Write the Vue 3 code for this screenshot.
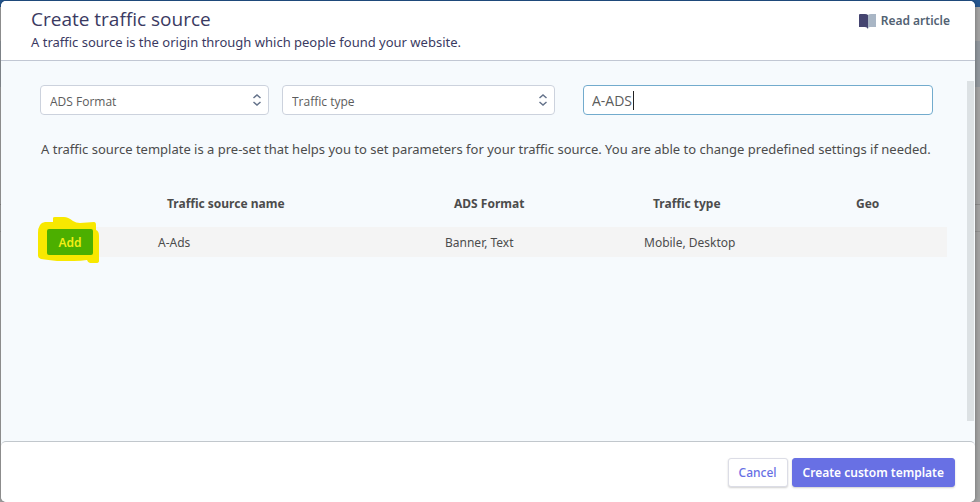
<script setup>
import { ref } from 'vue'

const format = ref('')
const trafficType = ref('')
const search = ref('A-ADS')
const sources = [{ name: 'A-Ads', formats: 'Banner, Text', types: 'Mobile, Desktop', geo: '' }]
</script>

<template>
  <div class="backdrop">
    <section class="modal" role="dialog" aria-labelledby="dialog-title">
      <header class="head">
        <div>
          <h1 id="dialog-title">Create traffic source</h1>
          <p>A traffic source is the origin through which people found your website.</p>
        </div>
        <a class="article" href="#">
          <svg width="18" height="15" viewBox="0 0 18 15" aria-hidden="true">
            <path d="M0 1Q0 0 1 0H6Q8 0 9 1V15Q8 13 6 13H0Z" fill="#444470" />
            <path d="M9 1Q10 0 12 0H17V13H11Q9 13 9 15Z" fill="#a9b6c5" />
          </svg>
          <span>Read article</span>
        </a>
      </header>

      <main class="body">
        <div class="filters">
          <div class="field">
            <select v-model="format" aria-label="ADS Format">
              <option value="">ADS Format</option>
            </select>
            <svg class="chevrons" width="10" height="12" viewBox="0 0 10 12" aria-hidden="true">
              <path d="M1.5 4L5 1L8.500 4M1.500 8L5 11L8.500 8" />
            </svg>
          </div>
          <div class="field">
            <select v-model="trafficType" aria-label="Traffic type">
              <option value="">Traffic type</option>
            </select>
            <svg class="chevrons" width="10" height="12" viewBox="0 0 10 12" aria-hidden="true">
              <path d="M1.5 4L5 1L8.500 4M1.500 8L5 11L8.500 8" />
            </svg>
          </div>
          <div class="field search">
            <input v-model="search" type="text" aria-label="Search" />
            <span class="caret"></span>
          </div>
        </div>

        <p class="hint">A traffic source template is a pre-set that helps you to set parameters for your traffic source. You are able to change predefined settings if needed.</p>

        <table>
          <colgroup>
            <col class="c-action" /><col /><col class="c-format" /><col class="c-type" /><col class="c-geo" />
          </colgroup>
          <thead>
            <tr>
              <th></th>
              <th>Traffic source name</th>
              <th>ADS Format</th>
              <th>Traffic type</th>
              <th>Geo</th>
            </tr>
          </thead>
          <tbody>
            <tr v-for="s in sources" :key="s.name">
              <td class="action">
                <svg class="marker" width="64" height="48" viewBox="0 0 64 48" aria-hidden="true">
                  <path d="M16 2Q16 1 18 1H27Q31 1 36 5Q39 7 43 7L57 6Q59 6 59 9V14Q62 15 62 20V45Q62 47 59 47H53Q51 47 50 44Q44 45 37 45H20Q11 44 4 43Q1 42 1 40V17Q1 7 8 6H16Z" fill="#f8e800" />
                </svg>
                <button class="add" type="button">Add</button>
              </td>
              <td>{{ s.name }}</td>
              <td>{{ s.formats }}</td>
              <td>{{ s.types }}</td>
              <td>{{ s.geo }}</td>
            </tr>
          </tbody>
        </table>
        <div class="scrollbar"></div>
      </main>

      <footer class="foot">
        <button class="btn cancel" type="button">Cancel</button>
        <button class="btn primary" type="button">Create custom template</button>
      </footer>
    </section>
  </div>
</template>

<style>
body {
  margin: 0;
}
</style>

<style scoped>
* {
  box-sizing: border-box;
}
.backdrop {
  min-height: 100vh;
  display: flex;
  padding: 1px 5px 0 1px;
  font-family: "Noto Sans", "Open Sans", sans-serif;
  font-size: 13px;
  color: #4c4c4c;
  background: linear-gradient(#24568f 0 7px, #a3a3a3 7px 41px, #91979d 41px 87px, #a3a3a3 87px 204px, #8b8b8b 204px 205px, #a3a3a3 205px 231px, #929292 231px 232px, #a3a3a3 232px);
}
.modal {
  flex: 1;
  display: flex;
  flex-direction: column;
  border-radius: 5px;
  overflow: hidden;
  background: #f6fafd;
  box-shadow: 0 0 5px #00000055;
}
.head {
  display: flex;
  justify-content: space-between;
  align-items: flex-start;
  height: 60px;
  padding: 6px 25px 0 30px;
  background: #fff;
  border-bottom: 1px solid #c1c7d3;
  color: #3a3a62;
}
h1 {
  margin: 0;
  font-family: "Open Sans", sans-serif;
  font-size: 19px;
  line-height: 25px;
  font-weight: 400;
}
.head p {
  margin: 0;
  line-height: 20px;
}
.article {
  display: flex;
  align-items: center;
  gap: 4px;
  padding-top: 4px;
  font-size: 12px;
  line-height: 20px;
  font-weight: 600;
  color: #526273;
  text-decoration: none;
}
.body {
  position: relative;
  flex: 1;
  padding: 24px 28px 24px 39px;
}
.filters {
  display: grid;
  grid-template-columns: 229fr 273fr 365fr;
  gap: 13px;
  padding-right: 14px;
}
.field {
  position: relative;
}
.search {
  margin-left: 15px;
}
select,
input {
  display: block;
  width: 100%;
  height: 30px;
  padding: 2px 9px 0;
  border: 1px solid #ccd2dd;
  border-radius: 4px;
  background: #fff;
  font-family: "Open Sans", sans-serif;
  font-size: 12px;
  color: #5c5c5c;
  appearance: none;
  outline: none;
}
input {
  padding: 0 8px;
  border-color: #72abcd;
  font-size: 14px;
}
.chevrons {
  position: absolute;
  right: 7px;
  top: 9px;
  fill: none;
  stroke: #65738b;
  stroke-width: 1.5;
}
.caret {
  position: absolute;
  left: 50px;
  top: 6px;
  width: 1px;
  height: 19px;
  background: #222;
}
.hint {
  margin: 24px 0 0;
  padding-left: 1px;
  line-height: 20px;
  white-space: nowrap;
}
table {
  width: 100%;
  margin-top: 31px;
  font-size: 12px;
  table-layout: fixed;
  border-collapse: collapse;
}
.c-action {
  width: 109px;
}
.c-format {
  width: 199px;
}
.c-type {
  width: 203px;
}
.c-geo {
  width: 109px;
}
th {
  height: 37px;
  padding: 0 0 9px 18px;
  text-align: left;
  font-weight: 700;
  line-height: 20px;
}
td {
  height: 30px;
  padding: 0 0 0 9px;
  background: #f4f4f4;
}
.action {
  position: relative;
  padding-left: 7px;
}
.marker {
  position: absolute;
  left: -3px;
  top: -11px;
}
.add {
  position: relative;
  display: block;
  width: 46px;
  height: 26px;
  padding: 0;
  border: 0;
  border-radius: 2px;
  background: #4caf00;
  color: #f3ee16;
  font: inherit;
  font-weight: 600;
}
.scrollbar {
  position: absolute;
  right: 1px;
  top: 20px;
  bottom: 20px;
  width: 7px;
  background: #dce1e4;
}
.foot {
  display: flex;
  justify-content: flex-end;
  align-items: center;
  gap: 4px;
  height: 61px;
  padding: 0 20px;
  background: #fff;
  border-top: 1px solid #c1c7cc;
  border-radius: 5px;
}
.btn {
  height: 29px;
  padding: 0 10px;
  border: 1px solid #6870e4;
  border-radius: 3px;
  font: inherit;
  font-size: 12px;
  font-weight: 500;
  box-shadow: 0 1px 2px #00000030;
}
.cancel {
  border-color: #dcdde6;
  background: #fff;
  color: #6870e4;
}
.primary {
  background: #6870e4;
  color: #fff;
  font-weight: 600;
}
</style>
